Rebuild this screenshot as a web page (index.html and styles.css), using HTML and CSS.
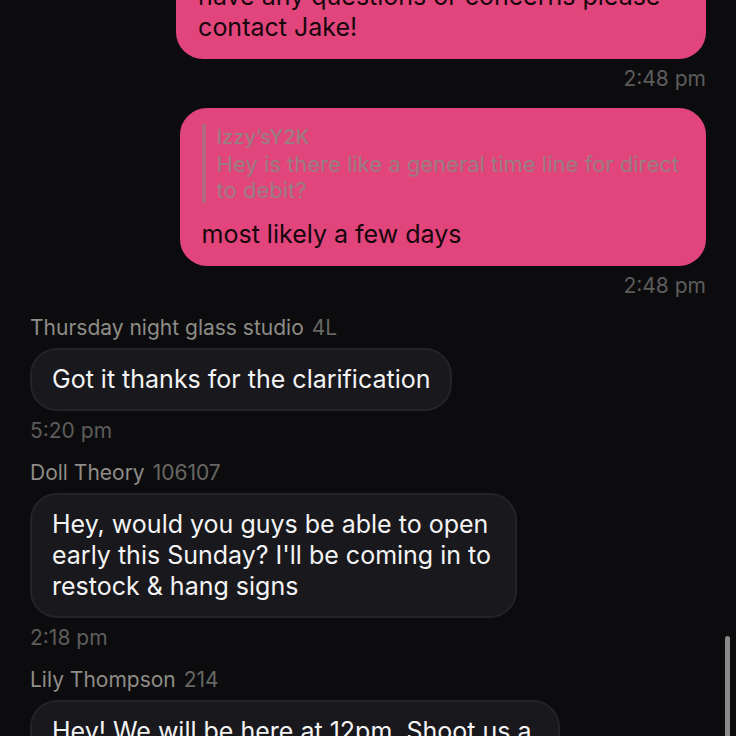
FILE: index.html
```html
<!DOCTYPE html>
<html lang="en">

<head>
    <meta charset="UTF-8">
    <meta name="viewport" content="width=device-width, initial-scale=1">
    <title>Messages</title>
    <link rel="stylesheet" href="styles.css">
</head>

<body>
    <main class="chat">
        <article class="message outgoing">
            <div class="bubble full">have any questions or concerns please<br>contact Jake!</div>
            <time class="time">2:48 pm</time>
        </article>

        <article class="message outgoing">
            <div class="bubble quoting">
                <blockquote class="quote">
                    <div class="quote-name">Izzy’sY2K</div>
                    <div class="quote-text">Hey is there like a general time line for direct<br>to debit?</div>
                </blockquote>
                most likely a few days
            </div>
            <time class="time">2:48 pm</time>
        </article>

        <article class="message">
            <header class="sender">Thursday night glass studio <span class="booth">4L</span></header>
            <div class="bubble">Got it thanks for the clarification</div>
            <time class="time">5:20 pm</time>
        </article>

        <article class="message">
            <header class="sender">Doll Theory <span class="booth">106107</span></header>
            <div class="bubble wrapped">Hey, would you guys be able to open<br>early this Sunday? I'll be coming in to<br>restock &amp; hang signs</div>
            <time class="time">2:18 pm</time>
        </article>

        <article class="message">
            <header class="sender">Lily Thompson <span class="booth">214</span></header>
            <div class="bubble full">Hey! We will be here at 12pm. Shoot us a</div>
        </article>
    </main>
    <div class="scroll-thumb"></div>
</body>

</html>
```
FILE: styles.css
```css
* {
    box-sizing: border-box;
}

body {
    margin: 0;
    height: 100vh;
    overflow: hidden;
    background-color: #0c0c0e;
    color: #f4f4f4;
    font-family: Inter, "Liberation Sans", sans-serif;
    font-size: 25px;
    line-height: 31px;
}

/* list is scrolled, so the first bubble starts above the window */
.chat {
    display: flex;
    flex-direction: column;
    gap: 16px;
    margin-top: -35px;
    padding: 0 30px;
}

.message {
    display: flex;
    flex-direction: column;
    align-items: flex-start;
    gap: 7px;
}

.outgoing {
    align-items: flex-end;
}

.bubble {
    max-width: 90%;
    padding: 14px 20px;
    border: 2px solid #242328;
    border-radius: 27px;
    background-color: #19181c;
    white-space: nowrap;
}

.wrapped {
    padding-right: 24px;
}

.full {
    width: 72vw;
}

.quoting {
    padding-right: 25px;
}

.outgoing .bubble {
    border-color: #e1457b;
    background-color: #e1457b;
    color: #16070d;
}

.sender,
.time {
    font-size: 21px;
    line-height: 26px;
}

.sender {
    display: flex;
    gap: 8px;
    color: #8f8d87;
}

.booth {
    color: #686763;
}

.time {
    color: #5d5c5b;
}

.quote {
    margin: 0 0 16px;
    padding-left: 11px;
    border-left: 4px solid #b0697e;
    color: #9a7d80;
    font-size: 22px;
    line-height: 26px;
}

.quote-name {
    margin-bottom: 1px;
    font-size: 20px;
    font-weight: 500;
}

.scroll-thumb {
    position: fixed;
    top: 636px;
    right: 6px;
    bottom: -20px;
    width: 5px;
    border-radius: 3px;
    background-color: #8a8a8b;
}
```
